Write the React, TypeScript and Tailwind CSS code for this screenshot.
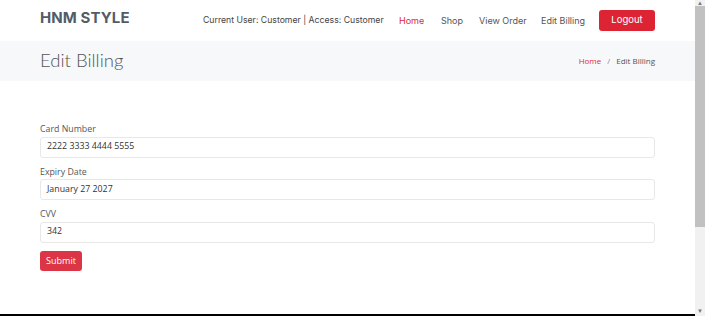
import React from "react";

export default function App() {
  return (
    <div className="flex w-[705px] h-[316px] overflow-hidden bg-white">
      <div className="flex flex-col w-[695px] h-[316px]">
        <header className="h-[41px] flex items-center justify-between pl-[40px] pr-[40px] bg-white">
          <div className="text-[15px] font-bold text-[#525c68] tracking-[0.1px] pb-[4px]" style={{ fontFamily: "Inter, sans-serif" }}>
            HNM STYLE
          </div>
          <nav className="flex items-center text-[9px] text-[#555]" style={{ fontFamily: "Inter, sans-serif" }}>
            <span className="w-[180px] mr-[16px] text-[8.7px] text-[#444] whitespace-nowrap">Current User: Customer | Access: Customer</span>
            <span className="w-[25px] mr-[17px] text-[#e0283a]">Home</span>
            <span className="w-[21px] mr-[17px]">Shop</span>
            <span className="w-[45px] mr-[17px] whitespace-nowrap">View Order</span>
            <span className="w-[42px] mr-[16px] whitespace-nowrap">Edit Billing</span>
            <button className="w-[56px] h-[21px] rounded-[3px] bg-[#dc2434] text-white text-[9.5px]">Logout</button>
          </nav>
        </header>
        <div className="h-[40px] bg-[#f7f8fa] flex items-center justify-between px-[40px]">
          <h1 className="text-[18.5px] font-light text-[#555]" style={{ fontFamily: "Lato, sans-serif" }}>Edit Billing</h1>
          <div className="text-[8px] text-[#555] flex gap-[6px]" style={{ fontFamily: "'Open Sans', sans-serif" }}>
            <span className="text-[#e0283a]">Home</span>
            <span className="text-[#888]">/</span>
            <span>Edit Billing</span>
          </div>
        </div>
        <form className="px-[40px] pt-[42px] flex flex-col" style={{ fontFamily: "'Open Sans', sans-serif" }}>
          {[
            ["Card Number", "2222 3333 4444 5555"],
            ["Expiry Date", "January 27 2027"],
            ["CVV", "342"],
          ].map(([label, value]) => (
            <div key={label} className="flex flex-col mb-[8px]">
              <label className="text-[8.8px] leading-[12.5px] text-[#555]">{label}</label>
              <div className="mt-[1px] h-[21px] border border-[#e8e8e8] rounded-[3px] px-[6px] flex items-center text-[8.8px] text-[#333]">
                {value}
              </div>
            </div>
          ))}
          <button type="button" className="w-[42px] h-[20px] rounded-[3px] bg-[#dc3545] text-white text-[9px]">Submit</button>
        </form>
        <div className="flex-1" />
        <div className="h-[2px] bg-black" />
      </div>
      <div className="w-[10px] h-[316px] bg-[#f1f1f1] flex flex-col items-center">
        <div className="h-[6px] text-[6px] leading-[6px] text-[#777]">▲</div>
        <div className="w-[10px] h-[221px] bg-[#c1c1c1]" />
        <div className="flex-1" />
        <div className="h-[8px] text-[6px] leading-[6px] text-[#777]">▼</div>
      </div>
    </div>
  );
}
